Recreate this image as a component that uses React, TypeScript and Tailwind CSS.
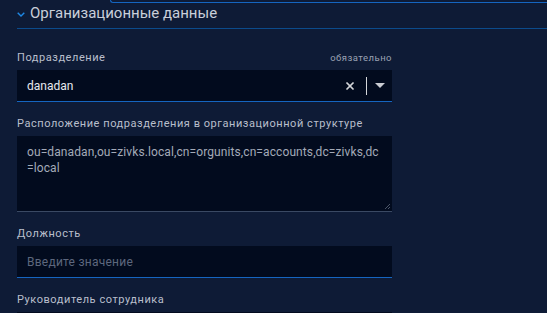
import { X } from "lucide-react";

const Label = ({ text, required }: { text: string; required?: boolean }) => (
  <div className="flex h-[24px] items-center justify-between">
    <span className="text-[11px] tracking-[0.05em] text-[#b9bfcc]">{text}</span>
    {required && (
      <span className="text-[9.5px] tracking-[0.05em] text-[#9aa2b3]">обязательно</span>
    )}
  </div>
);

const App = () => {
  return (
    <div
      className="w-[547px] h-[313px] overflow-hidden bg-[#0e1b36]"
      style={{ fontFamily: "Roboto, 'Noto Sans', sans-serif" }}
    >
      <div className="ml-[110px] h-[3px] rounded-bl-[4px] border-b border-l border-[#1565c0]" />

      <div className="ml-[17px] flex h-[26px] items-center gap-[5px] border-b border-[#0b4b8c] pb-[5px]">
        <svg width="8" height="5" viewBox="0 0 8 5" className="mt-[3px]">
          <path d="M0.7 0.7 L4 4 L7.3 0.7" fill="none" stroke="#1e88e5" strokeWidth="1.4" />
        </svg>
        <span className="text-[15px] text-[#c9cfda]">Организационные данные</span>
      </div>

      <div className="mt-[17px] flex w-[375px] flex-col gap-[10px] ml-[17px]">
        <div>
          <Label text="Подразделение" required />
          <div className="flex h-[32px] items-center border-b border-[#1565c0] bg-[#020b1e] pl-[10px] pr-[6px]">
            <span className="flex-1 text-[12px] text-[#e6e9ef]">danadan</span>
            <X size={12} strokeWidth={3.5} className="mr-[2px] text-[#d4d6da]" />
            <div className="mx-[8px] h-[18px] w-px bg-[#d4d6da]" />
            <svg width="10" height="5" viewBox="0 0 10 5" className="mr-[1px]">
              <path d="M0 0 L10 0 L5 5 Z" fill="#c9ccd2" />
            </svg>
          </div>
        </div>

        <div>
          <Label text="Расположение подразделения в организационной структуре" />
          <div className="relative h-[76px] border-b border-[#3a4963] bg-[#020b1e] px-[10px] pt-[8px]">
            <p className="break-all text-[12px] leading-[16px] tracking-[0.1px] text-[#a3aab8]">
              ou=danadan,ou=zivks.local,cn=orgunits,cn=accounts,dc=zivks,dc=local
            </p>
            <svg width="7" height="7" viewBox="0 0 7 7" className="absolute bottom-[1px] right-[1px]">
              <path d="M6 1 L1 6 M6 4 L4 6" stroke="#4b5568" strokeWidth="1" />
            </svg>
          </div>
        </div>

        <div>
          <Label text="Должность" />
          <div className="flex h-[32px] items-center border-b border-[#1565c0] bg-[#020b1e] px-[10px]">
            <span className="text-[12px] tracking-[0.02em] text-[#5d677d]">Введите значение</span>
          </div>
        </div>

        <div>
          <Label text="Руководитель сотрудника" />
          <div className="h-[32px] bg-[#020b1e]" />
        </div>
      </div>
    </div>
  );
};

export default App;
